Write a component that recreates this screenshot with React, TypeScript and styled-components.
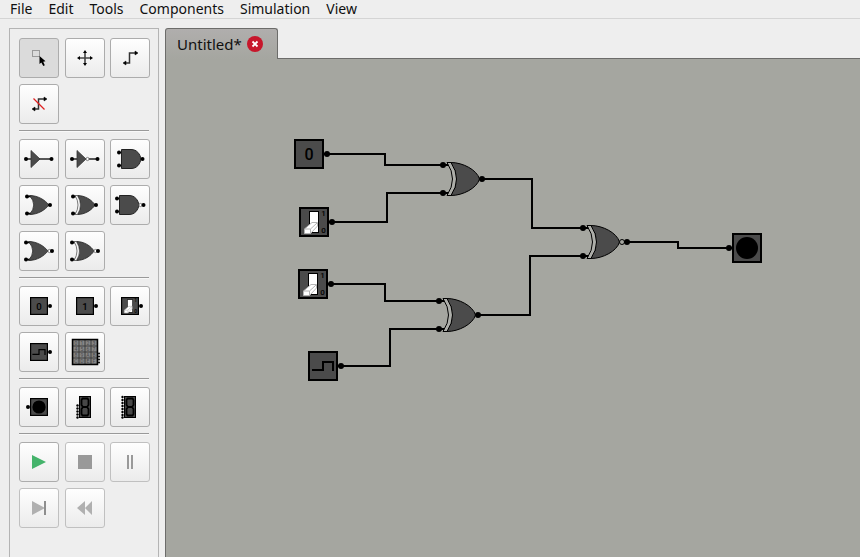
import React from 'react';
import styled, { createGlobalStyle, css } from 'styled-components';

const INK = '#000000';
const BODY = '#4b4b4b';
const CANVAS = '#a5a6a0';

const GlobalStyle = createGlobalStyle`
  *, *::before, *::after { box-sizing: border-box; }
  html, body, #root { height: 100%; }
  body {
    margin: 0;
    background: #eeeeee;
    color: #101010;
    font-family: "Noto Sans", "Open Sans", sans-serif;
    font-size: 14px;
    overflow: hidden;
  }
`;

const Window = styled.div`
  display: flex;
  flex-direction: column;
  height: 100vh;
`;

const MenuBar = styled.nav`
  display: flex;
  flex: none;
  gap: 16px;
  padding: 0 10px;
  border-bottom: 1px solid #d4d4d4;
`;

const MenuItem = styled.button`
  padding: 0;
  border: 0;
  background: none;
  color: inherit;
  font: inherit;
  line-height: 18px;
`;

const Workspace = styled.main`
  display: flex;
  flex: 1;
  gap: 6px;
  min-height: 0;
  padding: 9px 0 0 9px;
`;

const Palette = styled.aside`
  flex: none;
  width: 150px;
  padding: 9px 8px 0 9px;
  border: 1px solid #b4b4b4;
  border-bottom: 0;
`;

const ToolGroup = styled.div`
  display: grid;
  grid-template-columns: repeat(3, 40px);
  justify-content: space-between;
  row-gap: 6px;
`;

const Divider = styled.hr`
  height: 2px;
  margin: 6px 1px 7px 0;
  border: 0;
  border-top: 1px solid #999999;
  border-bottom: 1px solid #f8f8f8;
`;

const ToolButton = styled.button<{ $active?: boolean }>`
  display: block;
  width: 40px;
  height: 40px;
  padding: 0;
  border: 1px solid #acacac;
  border-radius: 3px;
  background: linear-gradient(#fefefe, #ebebeb);
  &:disabled { border-color: #c0c0c0; }
  ${(p) => p.$active && css`background: #dbdbdb;`}
`;

const IconSvg = styled.svg`
  display: block;
  width: 38px;
  height: 38px;
`;

const Editor = styled.section`
  display: flex;
  flex: 1;
  flex-direction: column;
  min-width: 0;
`;

const Tab = styled.div`
  display: flex;
  flex: none;
  align-self: flex-start;
  align-items: center;
  gap: 5px;
  height: 31px;
  margin-bottom: -1px;
  padding: 0 14px 0 11px;
  border: 1px solid #6c6c6a;
  border-bottom: 0;
  border-radius: 3px 3px 0 0;
  background: linear-gradient(#b0aead, ${CANVAS});
  font-size: 15px;
  z-index: 1;
`;

const TabLabel = styled.button`
  padding: 0;
  border: 0;
  background: none;
  color: inherit;
  font: inherit;
  line-height: 20px;
`;

const CloseButton = styled.button`
  width: 16px;
  height: 16px;
  padding: 0;
  border: 0;
  border-radius: 50%;
  background: #c7162b;
  svg { display: block; }
`;

const Canvas = styled.div`
  flex: 1;
  min-height: 0;
  overflow: hidden;
  border-top: 1px solid #6c6c6a;
  border-left: 1px solid #6c6c6a;
  background: ${CANVAS};
`;

const Schematic = styled.svg`
  display: block;
  overflow: visible;
`;

const Digit = styled.text`
  font-family: Roboto, "Liberation Sans", sans-serif;
  text-anchor: middle;
`;

type Point = { x: number; y: number };

function Pin({ x, y, r = 2 }: Point & { r?: number }) {
  return <circle cx={x} cy={y} r={r} fill={INK} />;
}

/* Component faces, drawn on a 30 by 30 grid */
function Frame() {
  return <rect x="1" y="1" width="28" height="28" fill={BODY} stroke={INK} strokeWidth="2" />;
}

function ConstantFace({ value }: { value: string }) {
  return (
    <>
      <Frame />
      <Digit x="15" y="21" fontSize="16" fontWeight="500" fill={INK}>{value}</Digit>
    </>
  );
}

function SwitchFace() {
  return (
    <>
      <Frame />
      <rect x="10.5" y="4.5" width="9" height="21" fill="#fff" stroke={INK} />
      <path d="M5.5 22L13 15.5H18.5V19L11.5 26.5H5.5Z" fill="#fff" stroke="#b4b4b4" />
      <path d="M5.5 22H11.5L18 16M11.5 22V26" fill="none" stroke="#b4b4b4" />
      <Digit x="24.5" y="9" fontSize="8" fontWeight="500" fill={INK}>1</Digit>
      <Digit x="24.5" y="26" fontSize="8" fontWeight="500" fill={INK}>0</Digit>
    </>
  );
}

function ClockFace() {
  return (
    <>
      <Frame />
      <path d="M4 19H15V11H25V20" fill="none" stroke={INK} strokeWidth="2" />
    </>
  );
}

function LampFace() {
  return (
    <>
      <Frame />
      <circle cx="15" cy="15" r="11" fill={INK} />
    </>
  );
}

function Node({ x, y, children }: Point & { children: React.ReactNode }) {
  return <g transform={`translate(${x} ${y})`}>{children}</g>;
}

function XorGate({ x, y, inverted }: Point & { inverted?: boolean }) {
  return (
    <Node x={x} y={y}>
      <path d="M0 0H6M0 28H6" stroke={INK} strokeWidth="2" />
      <path
        d="M8 -2.5C20 -2.5 34 5 36.5 14C34 23 20 30.5 8 30.5Q19 14 8 -2.5Z"
        fill={BODY}
        stroke={INK}
      />
      <path d="M8 -2.5H4Q15 14 4 30.5H8Q19 14 8 -2.5Z" fill="#adaea9" stroke={INK} />
      <Pin x={0} y={0} r={3} />
      <Pin x={0} y={28} r={3} />
      {inverted && <circle cx="39" cy="14" r="2.5" fill={CANVAS} stroke={INK} />}
      <Pin x={inverted ? 44 : 39} y={14} r={3} />
    </Node>
  );
}

const wires = [
  'M327 154H385V165H443',
  'M332 222H387V193H443',
  'M331 284H385V301H439',
  'M341 366H390V329H439',
  'M482 179H532V228H583',
  'M478 315H530V256H583',
  'M627 242H678V248H729',
];

const terminals: Point[] = [
  { x: 327, y: 154 },
  { x: 332, y: 222 },
  { x: 331, y: 284 },
  { x: 341, y: 366 },
  { x: 729, y: 248 },
];

function Circuit() {
  return (
    <Schematic width="694" height="498" viewBox="166 59 694 498" role="img" aria-label="Logic circuit">
      {wires.map((d) => (
        <path key={d} d={d} fill="none" stroke={INK} strokeWidth="2" />
      ))}
      <path d="M324 154h3M329 222h3M328 284h3M338 366h3M729 248h3" stroke={INK} strokeWidth="2" />
      {terminals.map((t) => (
        <Pin key={t.y} x={t.x} y={t.y} r={3} />
      ))}
      <Node x={294} y={139}><ConstantFace value="0" /></Node>
      <Node x={299} y={207}><SwitchFace /></Node>
      <Node x={298} y={269}><SwitchFace /></Node>
      <Node x={308} y={351}><ClockFace /></Node>
      <Node x={732} y={233}><LampFace /></Node>
      <XorGate x={443} y={165} />
      <XorGate x={439} y={301} />
      <XorGate x={583} y={228} inverted />
    </Schematic>
  );
}

/* Palette icons, drawn on a 40 by 40 grid */
function Mini({ children }: { children: React.ReactNode }) {
  return <g transform="translate(11 11) scale(0.6)">{children}</g>;
}

function WireIcon() {
  return (
    <>
      <path d="M15 25H19.5V15H26" fill="none" stroke="#333" strokeWidth="1.5" />
      <path d="M13 25L16 23V27ZM28 15L25 13V17Z" fill={INK} stroke={INK} strokeWidth="0.5" />
    </>
  );
}

function Bubble({ x }: { x: number }) {
  return <circle cx={x} cy="20" r="1.6" fill="#fff" stroke="#666" strokeWidth="0.8" />;
}

function AndIcon({ inverted }: { inverted?: boolean }) {
  return (
    <>
      <g transform={`translate(${inverted ? -2 : 0} 0)`}>
        <path d="M9 13.5h4M9 26.5h4" stroke={INK} />
        <path d="M11.5 10.5H21C27 10.5 30 15 31 20C30 25 27 29.5 21 29.5H11.5Z" fill={BODY} stroke="#222" />
        <Pin x={9} y={13.5} />
        <Pin x={9} y={26.5} />
      </g>
      {inverted && <Bubble x={30.5} />}
      <Pin x={inverted ? 33.5 : 32.5} y={20} />
    </>
  );
}

function OrIcon({ exclusive, inverted }: { exclusive?: boolean; inverted?: boolean }) {
  return (
    <>
      <g transform={`translate(${inverted ? -1 : 0} 0)`}>
        <path d="M8 11.5H14M8 28.5H14" stroke={INK} strokeWidth="1.5" />
        <path
          d={exclusive
            ? 'M12.5 10.5C20 10.5 27 15 30 20C27 25 20 29.5 12.5 29.5Q18.5 20 12.5 10.5Z'
            : 'M10.5 10.5C19 10.5 26 15 30 20C26 25 19 29.5 10.5 29.5Q19 20 10.5 10.5Z'}
          fill={BODY}
          stroke="#222"
          strokeWidth="0.8"
        />
        {exclusive && (
          <path d="M10 10.5H12.5Q18.5 20 12.5 29.5H10Q16 20 10 10.5Z" fill="#f4f4f4" stroke="#444" strokeWidth="0.7" />
        )}
        <Pin x={8} y={11.5} />
        <Pin x={8} y={28.5} />
      </g>
      {inverted && <Bubble x={30.5} />}
      <Pin x={inverted ? 33 : 31} y={20} />
    </>
  );
}

function BufferIcon({ inverted }: { inverted?: boolean }) {
  return (
    <>
      <path d="M7 20H33" stroke="#222" strokeWidth="1.5" />
      <path d="M12 11.5L21 20L12 28.5Z" fill={BODY} stroke="#333" strokeWidth="0.8" />
      {inverted && <Bubble x={22.5} />}
      <Pin x={7} y={20} />
      <Pin x={32.5} y={20} />
    </>
  );
}

const keys = ['0', '1', '2', '3', '4', '5', '6', '7', '8', '9', 'A', 'B', 'C', 'D', 'E', 'F'];

function KeypadIcon() {
  return (
    <>
      <rect x="7.5" y="7.5" width="25" height="25" fill="#3a3a3a" stroke={INK} strokeWidth="1.5" />
      {keys.map((k, i) => {
        const x = 9 + (i % 4) * 6;
        const y = 9 + Math.floor(i / 4) * 6;
        return (
          <g key={k}>
            <rect x={x - 0.5} y={y - 0.5} width="5" height="5" fill="#868686" />
            <Digit x={x + 2} y={y + 4} fontSize="5" fill="#4a4a4a">{k}</Digit>
          </g>
        );
      })}
      {[21.5, 24.5, 27.5, 30.5].map((y) => <Pin key={y} x={34} y={y} r={1} />)}
    </>
  );
}

function SegmentIcon({ pins }: { pins: number[] }) {
  return (
    <>
      <rect x="14.5" y="9.5" width="11" height="21" fill="#474747" stroke={INK} />
      <path d="M17.5 11.5H22.5L23.5 13V18L22 20L23.500 22V27L22.5 28.5H17.5L16.5 27V22L18 20L16.5 18V13ZM18 20H22" fill="none" stroke={INK} strokeWidth="1.8" />
      {pins.map((y) => <Pin key={y} x={12.5} y={y} r={1.2} />)}
    </>
  );
}

type Tool = { name: string; icon: React.ReactNode; active?: boolean; disabled?: boolean };

const groups: Tool[][] = [
  [
    {
      name: 'Select',
      active: true,
      icon: (
        <>
          <rect x="13.5" y="12.5" width="7" height="6" fill="none" stroke="#999" />
          <path d="M20.500 18V26L22.3 24.5L24.3 28L25.8 27.2L24.2 23.7L26.5 23.2Z" fill={INK} />
        </>
      ),
    },
    {
      name: 'Move',
      icon: (
        <>
          <path d="M14 20H26M20 14V26" stroke="#444" strokeWidth="1.6" />
          <path d="M12 20L15 18V22ZM28 20L25 18V22ZM20 12L18 15H22ZM20 28L18 25H22Z" fill={INK} />
        </>
      ),
    },
    { name: 'Draw wire', icon: <WireIcon /> },
    { name: 'Remove wire', icon: <><WireIcon /><path d="M14.5 14.5L25.5 25.5" stroke="#e02020" strokeWidth="1.2" /></> },
  ],
  [
    { name: 'Buffer', icon: <BufferIcon /> },
    { name: 'NOT gate', icon: <BufferIcon inverted /> },
    { name: 'AND gate', icon: <AndIcon /> },
    { name: 'OR gate', icon: <OrIcon /> },
    { name: 'XOR gate', icon: <OrIcon exclusive /> },
    { name: 'NAND gate', icon: <AndIcon inverted /> },
    { name: 'NOR gate', icon: <OrIcon inverted /> },
    { name: 'XNOR gate', icon: <OrIcon exclusive inverted /> },
  ],
  [
    { name: 'Constant 0', icon: <><Mini><ConstantFace value="0" /></Mini><Pin x={31} y={20} /></> },
    { name: 'Constant 1', icon: <><Mini><ConstantFace value="1" /></Mini><Pin x={31} y={20} /></> },
    { name: 'Switch', icon: <><Mini><SwitchFace /></Mini><Pin x={31} y={20} /></> },
    { name: 'Clock', icon: <><Mini><ClockFace /></Mini><Pin x={31} y={20} /></> },
    { name: 'Keypad', icon: <KeypadIcon /> },
  ],
  [
    { name: 'Lamp', icon: <><Mini><LampFace /></Mini><Pin x={9} y={20} /></> },
    { name: 'Hex display', icon: <SegmentIcon pins={[18.5, 21.5, 24.5, 27.5, 30.5]} /> },
    { name: 'Seven segment display', icon: <SegmentIcon pins={[10, 13, 16, 19, 22, 25, 28, 30.5]} /> },
  ],
  [
    { name: 'Start', icon: <path d="M13 13L27 20L13 27Z" fill="#45b36b" /> },
    { name: 'Stop', disabled: true, icon: <rect x="13" y="13" width="14" height="14" fill="#999" /> },
    { name: 'Pause', disabled: true, icon: <path d="M17 13h2v14h-2ZM21 13h2v14h-2Z" fill="#999" /> },
    { name: 'Step', disabled: true, icon: <><path d="M13 13L26 20L13 27Z" fill="#b0b0b0" /><rect x="25" y="13" width="2" height="14" fill="#8e8e8e" /></> },
    { name: 'Reset', disabled: true, icon: <path d="M20 13V27L12 20ZM27 13V27L20 20Z" fill="#b0b0b0" /> },
  ],
];

const menus = ['File', 'Edit', 'Tools', 'Components', 'Simulation', 'View'];

export default function App() {
  return (
    <Window>
      <GlobalStyle />
      <MenuBar>
        {menus.map((m) => <MenuItem key={m}>{m}</MenuItem>)}
      </MenuBar>
      <Workspace>
        <Palette>
          {groups.map((tools, i) => (
            <React.Fragment key={tools[0].name}>
              {i > 0 && <Divider />}
              <ToolGroup>
                {tools.map((t) => (
                  <ToolButton key={t.name} aria-label={t.name} $active={t.active} aria-pressed={t.active} disabled={t.disabled}>
                    <IconSvg viewBox="1 1 38 38" aria-hidden="true">{t.icon}</IconSvg>
                  </ToolButton>
                ))}
              </ToolGroup>
            </React.Fragment>
          ))}
        </Palette>
        <Editor>
          <Tab>
            <TabLabel>Untitled*</TabLabel>
            <CloseButton aria-label="Close tab">
              <svg width="16" height="16" viewBox="0 0 16 16" aria-hidden="true">
                <path d="M5.5 5.5L10.5 10.5M10.5 5.5L5.5 10.5" stroke="#fff" strokeWidth="1.8" />
              </svg>
            </CloseButton>
          </Tab>
          <Canvas>
            <Circuit />
          </Canvas>
        </Editor>
      </Workspace>
    </Window>
  );
}
